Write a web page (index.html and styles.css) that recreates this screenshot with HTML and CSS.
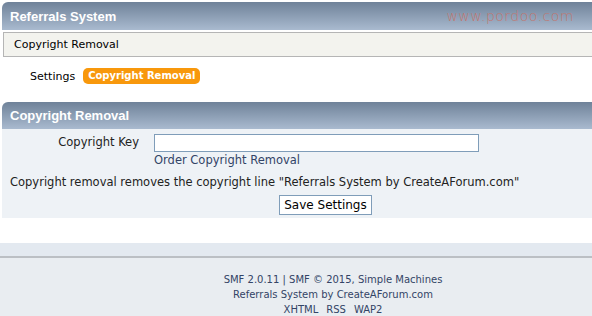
FILE: index.html
```html
<!DOCTYPE html>
<html lang="en">
<head>
    <meta charset="UTF-8">
    <title>Referrals System - Copyright Removal</title>
    <link rel="stylesheet" href="styles.css">
</head>
<body>
    <div class="page">
        <div class="cat-bar">
            <h3 class="cat-title">Referrals System</h3>
            <span class="watermark">www.pordoo.com</span>
        </div>
        <div class="info-bar">Copyright Removal</div>
        <div class="tabs">
            <span class="tab">Settings</span>
            <span class="tab active">Copyright Removal</span>
        </div>

        <div class="cat-bar second">
            <h3 class="cat-title">Copyright Removal</h3>
        </div>
        <div class="window">
            <div class="field-row">
                <label class="field-label" for="copyKey">Copyright Key</label>
                <div class="field-input">
                    <input type="text" id="copyKey" class="input-text">
                    <a class="order-link" href="#">Order Copyright Removal</a>
                </div>
            </div>
            <p class="note">Copyright removal removes the copyright line "Referrals System by CreateAForum.com"</p>
            <div class="actions">
                <button class="button">Save Settings</button>
            </div>
        </div>

        <div class="footer-band"></div>
        <div class="footer">
            <p>SMF 2.0.11 | SMF &copy; 2015, Simple Machines</p>
            <p>Referrals System by CreateAForum.com</p>
            <p class="footer-links"><a href="#">XHTML</a><a href="#">RSS</a><a href="#">WAP2</a></p>
        </div>
    </div>
</body>
</html>
```

FILE: styles.css
```css
html, body {
    margin: 0;
    padding: 0;
    overflow: hidden;
    background-color: #fff;
}

body {
    font-family: 'DejaVu Sans', Verdana, sans-serif;
    font-size: 11px;
    color: #000;
}

.page {
    width: 664px;
    margin-left: 2px;
    padding-top: 2px;
}

.cat-bar {
    display: flex;
    align-items: center;
    justify-content: space-between;
    height: 28px;
    padding: 0 8px;
    border-radius: 6px 6px 0 0;
    background: linear-gradient(#6f8299, #a9bacf);
}

.cat-title {
    margin: 0;
    font-family: 'Liberation Sans', Arial, sans-serif;
    font-size: 13px;
    font-weight: bold;
    color: #fff;
}

.watermark {
    margin-right: 84px;
    font-family: 'DejaVu Sans', sans-serif;
    font-size: 14px;
    font-weight: 200;
    letter-spacing: 0.5px;
    color: #c0766f;
}

.info-bar {
    margin: 2px 0 0 1px;
    height: 23px;
    line-height: 23px;
    padding-left: 10px;
    border: 1px solid #b5b5b5;
    border-right: none;
    background-color: #f3f3ee;
}

.tabs {
    display: flex;
    align-items: center;
    gap: 6px;
    height: 38px;
    padding-left: 26px;
    margin-bottom: 7px;
}

.tab {
    padding: 2px 2px;
}

.tab.active {
    padding: 2px 5px;
    border-radius: 5px;
    background-color: #f8980c;
    color: #fff;
    font-size: 10px;
    font-weight: bold;
    line-height: 12px;
}

.second {
    height: 27px;
}

.window {
    padding: 5px 8px 3px;
    background-color: #eef2f6;
    font-size: 11.5px;
}

.field-row {
    display: flex;
    gap: 15px;
}

.field-label {
    width: 129px;
    text-align: right;
    padding-top: 1px;
    color: #222;
}

.field-input {
    display: flex;
    flex-direction: column;
    align-items: flex-start;
}

.input-text {
    width: 319px;
    height: 14px;
    padding: 1px 2px;
    border: 1px solid #7f9db9;
    background-color: #fff;
    font: inherit;
}

.order-link {
    margin-top: 1px;
    color: #334466;
    text-decoration: none;
}

.note {
    margin: 8px 0 0;
    color: #222;
}

.actions {
    display: flex;
    justify-content: center;
    width: 631px;
    padding-top: 6px;
}

.button {
    padding: 2px 4px;
    border: 1px solid #7f9db9;
    background-color: #fff;
    font-family: 'DejaVu Sans', Verdana, sans-serif;
    font-size: 12px;
    color: #000;
}

.footer-band {
    height: 13px;
    margin-top: 25px;
    margin-left: -2px;
    border-bottom: 2px solid #bbbfc4;
    background-color: #e3e9f0;
}

.footer {
    margin-left: -2px;
    padding: 14px 0 10px;
    background-color: #e9edf1;
    text-align: center;
    font-size: 10px;
    line-height: 15px;
    color: #334466;
}

.footer p {
    margin: 0;
}

.footer-links {
    display: flex;
    justify-content: center;
    gap: 8px;
}

.footer-links a {
    color: #334466;
    text-decoration: none;
}
```
